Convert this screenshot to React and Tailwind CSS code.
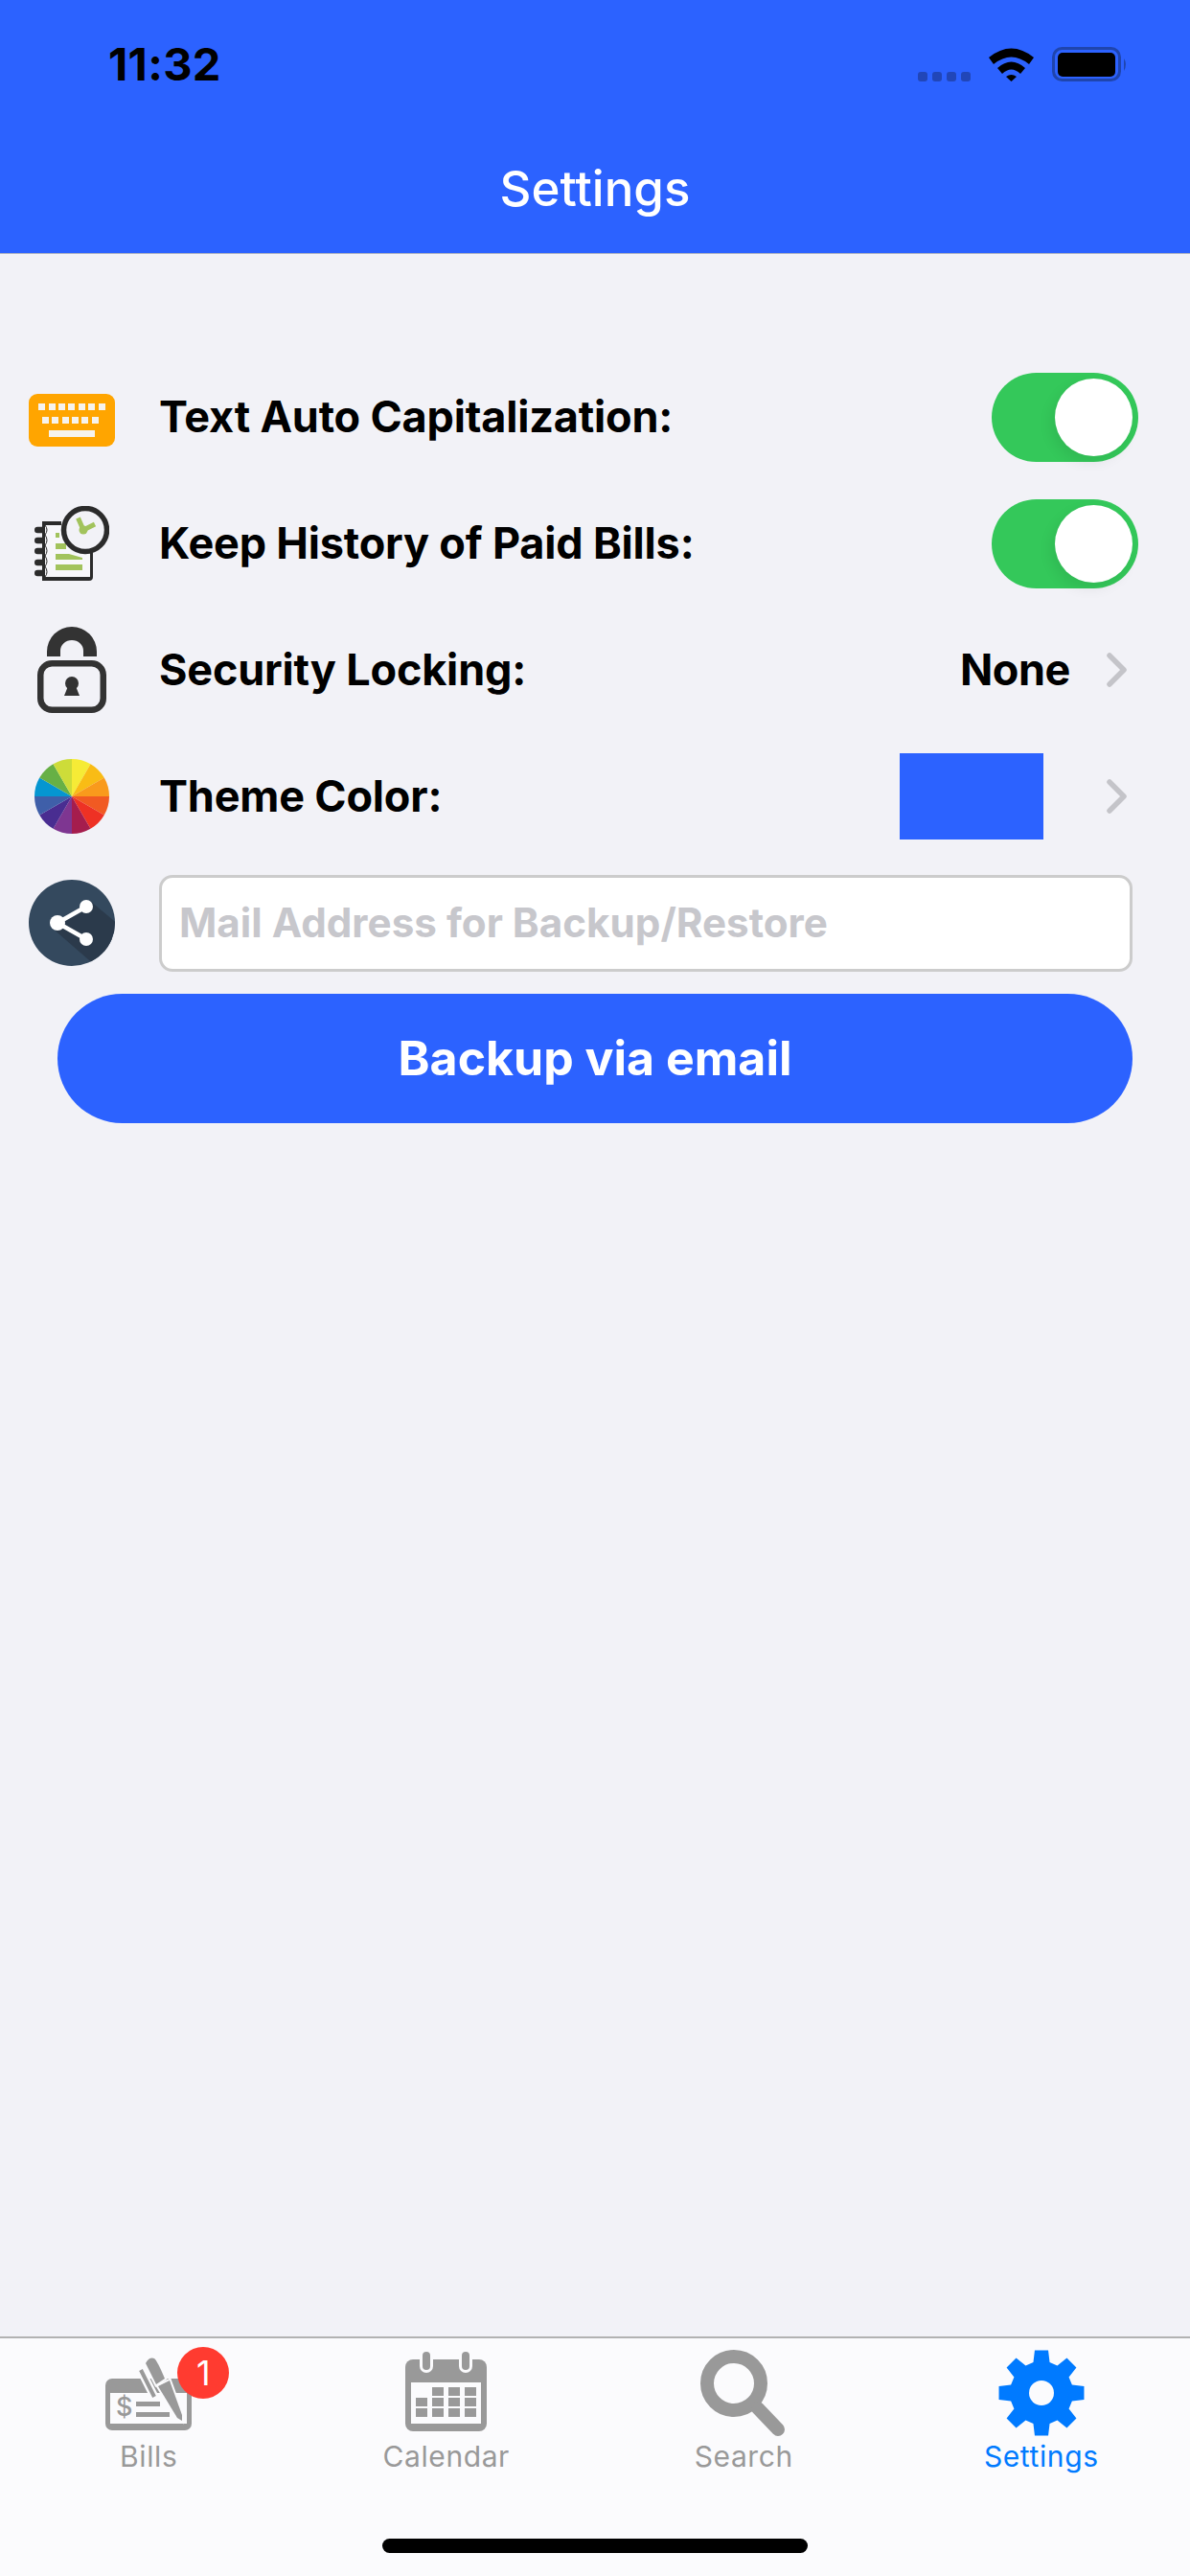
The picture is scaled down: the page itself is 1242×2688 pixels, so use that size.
const FONT = "font-['Inter','Liberation_Sans',sans-serif]";

function wedge(cx, cy, r, a0, a1) {
  const p = (a) => [cx + r * Math.sin((a * Math.PI) / 180), cy - r * Math.cos((a * Math.PI) / 180)];
  const [x0, y0] = p(a0);
  const [x1, y1] = p(a1);
  return `M${cx} ${cy}L${x0} ${y0}A${r} ${r} 0 0 1 ${x1} ${y1}Z`;
}

function gearPath() {
  let d = "";
  for (let i = 0; i < 8; i++) {
    const c = i * 45;
    const pts = [
      [33, c - 15],
      [45, c - 9],
      [45, c + 9],
      [33, c + 15],
    ];
    pts.forEach(([r, a], j) => {
      const x = 45 + r * Math.sin((a * Math.PI) / 180);
      const y = 45 - r * Math.cos((a * Math.PI) / 180);
      d += `${i === 0 && j === 0 ? "M" : "L"}${x.toFixed(2)} ${y.toFixed(2)}`;
    });
  }
  return d + "Z";
}

const WHEEL = ["#f6eb36", "#f9bc15", "#f99a1c", "#f15a22", "#ee3124", "#a51d4d", "#7e3691", "#492d91", "#3f5fa9", "#0596d1", "#67b045", "#cddc39"];

function KeyboardIcon() {
  const row1 = [10, 21, 31, 41, 52, 62, 73];
  const row2 = [14, 24, 35, 45, 55, 66];
  return (
    <svg className="mt-[7px]" width="90" height="55" viewBox="0 0 90 55">
      <rect width="90" height="55" rx="9" fill="#ffa500" />
      {row1.map((x) => <rect key={x} x={x} y="10" width="7" height="7" fill="#f6f3ee" />)}
      {row2.map((x) => <rect key={x} x={x} y="24" width="7" height="7" fill="#f6f3ee" />)}
      <rect x="21" y="38" width="48" height="7" fill="#f6f3ee" />
    </svg>
  );
}

function HistoryIcon() {
  return (
    <svg width="78" height="78" viewBox="0 0 78 78">
      <path d="M8 16H28V20H11V74H58V48H61V74Q61 78 57 78H8Z" fill="#2b2b2b" />
      <path d="M11 20H40V50H58V74H11Z" fill="#f7f7fa" />
      {[25, 36, 47, 59, 70].map((y) => <rect key={y} x="0" y={y - 3.2} width="11" height="6.4" rx="3.2" fill="#2b2b2b" />)}
      <path d="M11 20q4 5 0 10q4 6 0 11q4 6 0 11q4 6 0 11q4 6 0 11" fill="none" stroke="#2b2b2b" strokeWidth="1" />
      <rect x="22" y="28" width="4" height="5" fill="#a2c35c" />
      <rect x="22" y="39" width="11" height="6" fill="#a2c35c" />
      <path d="M22 50H36L50 54V56H22Z" fill="#a2c35c" />
      <rect x="22" y="61" width="28" height="6" fill="#a2c35c" />
      <circle cx="53" cy="25" r="22.5" fill="#f2f2f7" stroke="#2b2b2b" strokeWidth="5.5" />
      <path d="M45.5 12.5L51 25L63 19" fill="none" stroke="#a2c35c" strokeWidth="5" strokeLinejoin="round" />
      <circle cx="51" cy="25" r="4.5" fill="#a2c35c" />
    </svg>
  );
}

function LockIcon() {
  return (
    <svg width="72" height="90" viewBox="0 0 72 90">
      <path d="M10 31V26A26 26 0 0 1 62 26V31H48V25A12 11 0 0 0 24 25V31Z" fill="#333333" />
      <rect x="3.25" y="38.25" width="65.5" height="48.5" rx="12" fill="none" stroke="#333333" strokeWidth="6.5" />
      <circle cx="36" cy="59" r="7" fill="#333333" />
      <path d="M32 62H40L44 72H28Z" fill="#333333" />
    </svg>
  );
}

function WheelIcon() {
  return (
    <svg width="78" height="78" viewBox="0 0 78 78">
      {WHEEL.map((c, i) => <path key={c} d={wedge(39, 39, 39, i * 30, (i + 1) * 30)} fill={c} />)}
    </svg>
  );
}

function ShareIcon() {
  return (
    <svg width="90" height="90" viewBox="0 0 90 90">
      <defs>
        <clipPath id="share-clip"><circle cx="45" cy="45" r="45" /></clipPath>
      </defs>
      <circle cx="45" cy="45" r="45" fill="#34495e" />
      <path d="M64 22L100 52V90H70L24 50Z" fill="#2b3a4b" clipPath="url(#share-clip)" />
      <path d="M60 28L30 45L60 62" fill="none" stroke="#ffffff" strokeWidth="4.5" />
      <circle cx="60" cy="28" r="7" fill="#ffffff" />
      <circle cx="30" cy="45" r="8" fill="#ffffff" />
      <circle cx="60" cy="62" r="7" fill="#ffffff" />
    </svg>
  );
}

function BillsIcon() {
  return (
    <svg width="90" height="77" viewBox="0 0 90 77">
      <rect x="0" y="22" width="90" height="54" rx="7" fill="#999999" />
      <rect x="5" y="37" width="80" height="32" fill="#fbfbfd" />
      <text x="11" y="61" fontSize="27" fontFamily="Inter, sans-serif" fontWeight="500" fill="#999999">$</text>
      <rect x="32" y="46" width="25" height="5" fill="#999999" />
      <rect x="32" y="57" width="35" height="5" fill="#999999" />
      <path d="M37 13L51 41" fill="none" stroke="#fbfbfd" strokeWidth="9" />
      <path d="M37 13L51 41" fill="none" stroke="#999999" strokeWidth="4" />
      <path d="M55 30L67 24L80 60L80 66L75 63Z" fill="#999999" stroke="#fbfbfd" strokeWidth="4" paintOrder="stroke" />
      <path d="M42 6Q46 -1 51 1Q54 3 62 22L53 28Z" fill="#999999" stroke="#fbfbfd" strokeWidth="4" paintOrder="stroke" />
    </svg>
  );
}

function CalendarIcon() {
  const cols = [11, 28, 45, 62];
  const rows = [37, 48, 59];
  return (
    <svg width="85" height="83" viewBox="0 0 85 83">
      <rect x="0" y="8" width="85" height="75" rx="8" fill="#999999" />
      <rect x="6" y="32" width="73" height="43" fill="#fbfbfd" />
      {[22, 63].map((x) => (
        <g key={x}>
          <rect x={x - 7} y="0" width="14" height="22" rx="7" fill="#fbfbfd" />
          <rect x={x - 4} y="0" width="8" height="19" rx="4" fill="#999999" />
        </g>
      ))}
      {rows.map((y, r) =>
        cols.map((x, c) => (r === 0 && c === 0 ? null : <rect key={`${x}-${y}`} x={x} y={y} width="12" height="9" fill="#999999" />))
      )}
    </svg>
  );
}

function SearchIcon() {
  return (
    <svg width="90" height="90" viewBox="0 0 90 90">
      <circle cx="35" cy="35" r="28" fill="none" stroke="#999999" strokeWidth="14" />
      <path d="M60 61L81 83" fill="none" stroke="#999999" strokeWidth="14" strokeLinecap="round" />
    </svg>
  );
}

function GearIcon() {
  return (
    <svg width="90" height="90" viewBox="0 0 90 90">
      <path d={gearPath()} fill="#007aff" />
      <circle cx="45" cy="45" r="13" fill="#fbfbfd" />
    </svg>
  );
}

function Chevron() {
  return (
    <svg width="21" height="36" viewBox="0 0 21 36">
      <path d="M3 3L18 18L3 33" fill="none" stroke="#c4c4c9" strokeWidth="5.5" strokeLinecap="round" strokeLinejoin="round" />
    </svg>
  );
}

function Toggle() {
  return (
    <div className="flex h-[93px] w-[153px] items-center justify-end rounded-full bg-[#34c85a] pr-[6px]">
      <div className="h-[81px] w-[81px] rounded-full bg-white shadow-[-4px_6px_14px_rgba(0,0,0,0.08)]" />
    </div>
  );
}

function Row({ icon, label, children }) {
  return (
    <div className="flex h-[132px] items-center">
      <div className="flex w-[150px] justify-center">{icon}</div>
      <div className="ml-[16px] flex-1 text-[45px] font-bold tracking-[-0.18px] text-black">{label}</div>
      {children}
    </div>
  );
}

function Tab({ icon, label, active, pb, badge }) {
  return (
    <div className="flex flex-col items-center">
      <div className={`relative flex h-[102px] items-end ${pb ? "pb-[5px]" : ""}`}>
        {icon}
        {badge && (
          <div className="absolute left-[75px] top-[9px] flex h-[54px] w-[54px] items-center justify-center rounded-full bg-[#ff3b30] text-[36px] text-white">
            {badge}
          </div>
        )}
      </div>
      <div className={`mt-[3px] text-[30px] leading-[36px] tracking-[0.6px] ${active ? "text-[#007aff]" : "text-[#999999]"}`}>{label}</div>
    </div>
  );
}

export default function App() {
  return (
    <div className={`flex h-[2688px] w-[1242px] flex-col overflow-hidden bg-[#f2f2f7] ${FONT}`}>
      {/* header */}
      <div className="h-[265px] border-b border-[#a9b0c4] bg-[#2c62ff]">
        <div className="flex h-[166px] items-start justify-between pt-[38px] pl-[113px] pr-[65px]">
          <div className="text-[47px] font-bold leading-[57px] tracking-[0.3px] text-black">11:32</div>
          <div className="flex items-end pt-[11px]">
            <div className="flex gap-[5px]">
              {[0, 1, 2, 3].map((i) => <div key={i} className="h-[10px] w-[10px] rounded-[3px] bg-[#2146b8]" />)}
            </div>
            <svg className="ml-[19px]" width="47" height="36" viewBox="0 0 47 36">
              <path d="M0 11Q23.5 -8 47 11L42 18Q23.5 3 5 18Z" fill="#000" />
              <path d="M9 22Q23.5 9 38 22L33 28Q23.5 19 14 28Z" fill="#000" />
              <path d="M18 31Q23.5 27 29 31L23.5 36Z" fill="#000" />
            </svg>
            <svg className="ml-[19px]" width="79" height="36" viewBox="0 0 79 36">
              <rect x="1.5" y="1.5" width="69" height="33" rx="9" fill="none" stroke="#1f45ad" strokeWidth="3" />
              <rect x="6" y="6" width="60" height="25" rx="5" fill="#000" />
              <path d="M75 12Q79 18 75 25Z" fill="#1f45ad" />
            </svg>
          </div>
        </div>
        <div className="text-center text-[51px] font-medium leading-[62px] text-white">Settings</div>
      </div>

      {/* settings rows */}
      <div className="flex-1 pt-[104px]">
        <Row icon={<KeyboardIcon />} label="Text Auto Capitalization:">
          <div className="mr-[54px]"><Toggle /></div>
        </Row>
        <Row icon={<HistoryIcon />} label="Keep History of Paid Bills:">
          <div className="mr-[54px]"><Toggle /></div>
        </Row>
        <Row icon={<LockIcon />} label="Security Locking:">
          <div className="mr-[66px] flex items-center gap-[38px]">
            <span className="text-[45px] font-bold tracking-[-0.4px] text-black">None</span>
            <Chevron />
          </div>
        </Row>
        <Row icon={<WheelIcon />} label="Theme Color:">
          <div className="mr-[66px] flex items-center gap-[66px]">
            <div className="h-[90px] w-[150px] bg-[#2c62ff]" />
            <Chevron />
          </div>
        </Row>
        <div className="flex h-[132px] items-center">
          <div className="flex w-[150px] justify-center"><ShareIcon /></div>
          <input
            readOnly
            placeholder="Mail Address for Backup/Restore"
            className="ml-[16px] h-[101px] w-[1016px] rounded-[14px] border-[3px] border-[#cccccc] bg-white pb-[2px] pl-[18px] text-[42.2px] font-bold outline-none placeholder:text-[#c7c7cc]"
          />
        </div>
        <div className="mx-[60px] mt-[8px] flex h-[135px] items-center justify-center rounded-full bg-[#2c62ff] text-[50px] font-bold text-white">
          Backup via email
        </div>
      </div>

      {/* tab bar */}
      <div className="flex h-[250px] flex-col border-t-2 border-[#b2b2b2] bg-[#fbfbfd]">
        <div className="grid grid-cols-4">
          <Tab icon={<BillsIcon />} label="Bills" pb badge="1" />
          <Tab icon={<CalendarIcon />} label="Calendar" pb />
          <Tab icon={<SearchIcon />} label="Search" />
          <Tab icon={<GearIcon />} label="Settings" active />
        </div>
        <div className="mx-auto mb-[24px] mt-auto h-[15px] w-[444px] rounded-full bg-black" />
      </div>
    </div>
  );
}
